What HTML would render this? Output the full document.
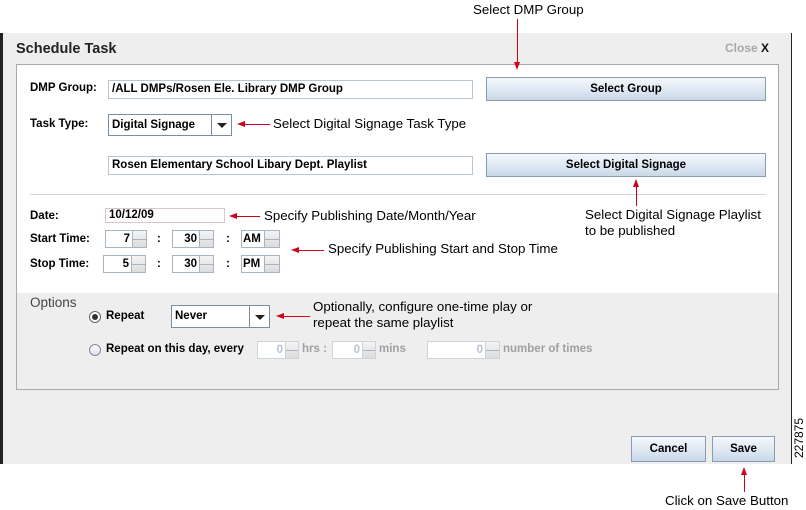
<!DOCTYPE html>
<html><head><meta charset="utf-8"><style>
*{margin:0;padding:0;box-sizing:border-box}
body{width:806px;height:510px;background:#fff;position:relative;overflow:hidden;font-family:"Liberation Sans",Arial,sans-serif;color:#000}
.a{position:absolute}
.b{font-weight:bold;font-size:11.5px}
.n{font-size:13.3px}
.fld{position:absolute;background:#fff;border:1px solid #b8c4d0;font-weight:bold;font-size:11.5px;padding-left:3px;line-height:16px}
.btn{position:absolute;border:1px solid #8a9cb0;background:linear-gradient(#f4f8fc,#dbe6f2 60%,#c9d7e6);font-weight:bold;font-size:11.5px;text-align:center}
.sp{position:absolute;background:#fff;border:1px solid #a8b4c0;font-weight:bold;font-size:11.5px;text-align:right;padding-right:2px;line-height:16px}
.sb{position:absolute;border:1px solid #a8b4c0;background:linear-gradient(#f4f4f4,#dcdcdc)}
.sb:after{content:"";position:absolute;left:0;right:0;top:50%;border-top:1px solid #a8b4c0}
.ln{position:absolute;height:1px;background:#d0021b}
.vl{position:absolute;width:1px;background:#d0021b}
.al{position:absolute;width:0;height:0;border-top:3px solid transparent;border-bottom:3px solid transparent;border-right:8px solid #d0021b}
.ad{position:absolute;width:0;height:0;border-left:3px solid transparent;border-right:3px solid transparent;border-top:8px solid #d0021b}
.au{position:absolute;width:0;height:0;border-left:3px solid transparent;border-right:3px solid transparent;border-bottom:8px solid #d0021b}
.g{color:#a0a0a0}
.gf{border-color:#ccd4dc;color:#b8c4d0}
</style></head><body>
<div class="a" style="left:0;top:33px;width:792px;height:431px;background:#eeeeee;border-left:3px solid #222;border-right:1px solid #222"></div>
<div class="a" style="left:16px;top:64px;width:763px;height:326px;border:1px solid #a8a8a8;background:#eee"></div>
<div class="a" style="left:17px;top:65px;width:761px;height:228px;background:#fff"></div>
<div class="a" style="left:30px;top:194px;width:736px;height:1px;background:#d4d4d4"></div>

<div class="a" style="left:16px;top:41px;font-weight:bold;font-size:14.5px;color:#222">Schedule Task</div>
<div class="a" style="left:725px;top:41px;font-weight:bold;font-size:12px;color:#a8a8a8">Close <span style="color:#111">X</span></div>

<div class="a n" style="left:473px;top:2px">Select DMP Group</div>
<div class="vl" style="left:517px;top:19px;height:44px"></div><div class="ad" style="left:514px;top:62px"></div>

<div class="a b" style="left:30px;top:82px">DMP Group:</div>
<div class="fld" style="left:108px;top:80px;width:365px;height:19px">/ALL DMPs/Rosen Ele. Library DMP Group</div>
<div class="btn" style="left:486px;top:77px;width:280px;height:24px;line-height:22px">Select Group</div>

<div class="a b" style="left:30px;top:118px">Task Type:</div>
<div class="fld" style="left:108px;top:114px;width:104px;height:22px;line-height:20px;border-color:#7a8ca0">Digital Signage</div>
<div class="a" style="left:211px;top:114px;width:21px;height:22px;border:1px solid #7a8ca0;background:#fff"><div class="a" style="left:5px;top:8px;border-left:5px solid transparent;border-right:5px solid transparent;border-top:5px solid #222"></div></div>
<div class="ln" style="left:244px;top:124px;width:26px"></div><div class="al" style="left:237px;top:121px"></div>
<div class="a n" style="left:273px;top:116px">Select Digital Signage Task Type</div>

<div class="fld" style="left:108px;top:156px;width:365px;height:19px">Rosen Elementary School Libary Dept. Playlist</div>
<div class="btn" style="left:486px;top:153px;width:280px;height:24px;line-height:22px">Select Digital Signage</div>
<div class="vl" style="left:636px;top:186px;height:20px"></div><div class="au" style="left:633px;top:179px"></div>
<div class="a n" style="left:585px;top:207px;line-height:16px">Select Digital Signage Playlist<br>to be published</div>

<div class="a b" style="left:30px;top:210px">Date:</div>
<div class="fld" style="left:105px;top:208px;width:120px;height:15px;line-height:13px;border-color:#d8c8c8">10/12/09</div>
<div class="ln" style="left:236px;top:216px;width:24px"></div><div class="al" style="left:229px;top:213px"></div>
<div class="a n" style="left:264px;top:208px">Specify Publishing Date/Month/Year</div>

<div class="a b" style="left:30px;top:233px">Start Time:</div>
<div class="sp" style="left:105px;top:230px;width:28px;height:18px">7</div><div class="sb" style="left:132px;top:230px;width:15px;height:18px"></div>
<div class="a b" style="left:157px;top:233px">:</div>
<div class="sp" style="left:172px;top:230px;width:28px;height:18px">30</div><div class="sb" style="left:199px;top:230px;width:15px;height:18px"></div>
<div class="a b" style="left:226px;top:233px">:</div>
<div class="sp" style="left:241px;top:230px;width:24px;height:18px;text-align:left;padding-left:1px">AM</div><div class="sb" style="left:264px;top:230px;width:16px;height:18px"></div>

<div class="a b" style="left:30px;top:258px">Stop Time:</div>
<div class="sp" style="left:103px;top:255px;width:29px;height:18px">5</div><div class="sb" style="left:131px;top:255px;width:15px;height:18px"></div>
<div class="a b" style="left:157px;top:258px">:</div>
<div class="sp" style="left:172px;top:255px;width:28px;height:18px">30</div><div class="sb" style="left:199px;top:255px;width:15px;height:18px"></div>
<div class="a b" style="left:226px;top:258px">:</div>
<div class="sp" style="left:241px;top:255px;width:24px;height:18px;text-align:left;padding-left:1px">PM</div><div class="sb" style="left:264px;top:255px;width:16px;height:18px"></div>
<div class="ln" style="left:298px;top:250px;width:26px"></div><div class="al" style="left:291px;top:247px"></div>
<div class="a n" style="left:328px;top:241px">Specify Publishing Start and Stop Time</div>

<div class="a" style="left:30px;top:295px;font-size:13.5px;color:#444">Options</div>
<div class="a" style="left:89px;top:311px;width:12px;height:12px;border-radius:50%;border:1px solid #666;background:#fff"><div class="a" style="left:2px;top:2px;width:6px;height:6px;border-radius:50%;background:#333"></div></div>
<div class="a b" style="left:106px;top:310px">Repeat</div>
<div class="fld" style="left:171px;top:305px;width:80px;height:23px;line-height:21px;border-color:#7a8ca0">Never</div>
<div class="a" style="left:249px;top:305px;width:21px;height:23px;border:1px solid #7a8ca0;background:#fff"><div class="a" style="left:5px;top:9px;border-left:5px solid transparent;border-right:5px solid transparent;border-top:5px solid #222"></div></div>
<div class="ln" style="left:283px;top:316px;width:27px"></div><div class="al" style="left:276px;top:313px"></div>
<div class="a n" style="left:313px;top:299px;line-height:16px">Optionally, configure one-time play or<br>repeat the same playlist</div>

<div class="a" style="left:89px;top:344px;width:12px;height:12px;border-radius:50%;border:1px solid #889;background:linear-gradient(#fff,#dde)"></div>
<div class="a b" style="left:106px;top:343px">Repeat on this day, every</div>
<div class="sp gf" style="left:257px;top:341px;width:29px;height:18px">0</div><div class="sb gf" style="left:285px;top:341px;width:14px;height:18px"></div>
<div class="a b g" style="left:302px;top:343px">hrs :</div>
<div class="sp gf" style="left:332px;top:341px;width:31px;height:18px">0</div><div class="sb gf" style="left:362px;top:341px;width:14px;height:18px"></div>
<div class="a b g" style="left:379px;top:343px">mins</div>
<div class="sp gf" style="left:427px;top:341px;width:59px;height:18px">0</div><div class="sb gf" style="left:485px;top:341px;width:15px;height:18px"></div>
<div class="a b g" style="left:503px;top:343px">number of times</div>

<div class="btn" style="left:631px;top:436px;width:75px;height:26px;line-height:24px">Cancel</div>
<div class="btn" style="left:712px;top:436px;width:63px;height:26px;line-height:24px">Save</div>
<div class="vl" style="left:744px;top:474px;height:18px"></div><div class="au" style="left:741px;top:467px"></div>
<div class="a n" style="left:665px;top:493px">Click on Save Button</div>

<div class="a" style="left:774px;top:431px;width:50px;height:14px;line-height:14px;font-size:12px;transform:rotate(-90deg);text-align:center">227875</div>
</body></html>
